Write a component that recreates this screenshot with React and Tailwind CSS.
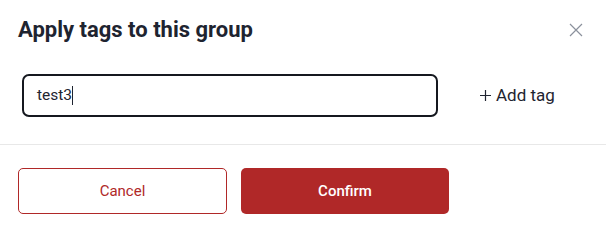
import React from "react";

function CloseIcon() {
  return (
    <svg width="14" height="14" viewBox="0 0 14 14" fill="none" stroke="#8b919c" strokeWidth="1.2">
      <path d="M1 1L13 13M13 1L1 13" />
    </svg>
  );
}

function PlusIcon() {
  return (
    <svg width="11" height="11" viewBox="0 0 11 11" fill="none" stroke="#1f2430" strokeWidth="1.2">
      <path d="M5.5 0V11M0 5.5H11" />
    </svg>
  );
}

export default function App() {
  return (
    <div className="w-[606px] h-[230px] bg-white font-['Roboto',sans-serif] overflow-hidden">
      {/* header */}
      <div className="flex items-center justify-between pl-[18px] pr-[23px] pt-[16px]">
        <h2 className="text-[22px] leading-[28px] font-bold text-[#1e2430]">Apply tags to this group</h2>
        <button className="flex items-center justify-center w-[14px] h-[14px]">
          <CloseIcon />
        </button>
      </div>

      {/* tag input row */}
      <div className="flex items-center pl-[22px] pt-[30px] pb-[27px]">
        <div className="flex items-center w-[416px] h-[43px] border-2 border-[#15181f] rounded-[7px] pl-[13px]">
          <span className="text-[15.5px] text-[#1e2430]">test3</span>
          <span className="w-px h-[19px] bg-[#1e2430]"></span>
        </div>
        <button className="flex items-center gap-[5px] ml-[42px] text-[17px] text-[#1e2430]">
          <PlusIcon />
          Add tag
        </button>
      </div>

      <div className="h-px bg-[#e8e8e8]"></div>

      {/* actions */}
      <div className="flex gap-[14px] pl-[18px] pt-[23px]">
        <button className="w-[209px] h-[46px] rounded-[5px] border border-[#b02828] text-[#b02828] text-[15px]">
          Cancel
        </button>
        <button className="w-[208px] h-[46px] rounded-[5px] bg-[#b02828] text-white text-[15px] font-medium">
          Confirm
        </button>
      </div>
    </div>
  );
}
